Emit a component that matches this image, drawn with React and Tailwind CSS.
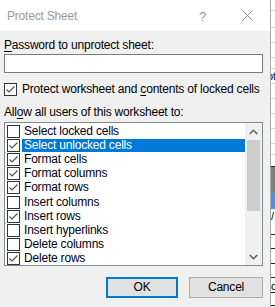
import React from "react";

const items = [
  ["Select locked cells", false],
  ["Select unlocked cells", true],
  ["Format cells", true],
  ["Format columns", true],
  ["Format rows", true],
  ["Insert columns", false],
  ["Insert rows", true],
  ["Insert hyperlinks", false],
  ["Delete columns", false],
  ["Delete rows", true],
];

function Box({ checked }) {
  return (
    <div className="w-[13px] h-[13px] border border-[#333333] bg-white flex-none relative">
      {checked && (
        <svg width="11" height="11" viewBox="0 0 11 11" className="absolute left-0 top-0">
          <path d="M1.5 5.5 L4 8 L9.5 2.5" fill="none" stroke="#4d4d4d" strokeWidth="1.1" />
        </svg>
      )}
    </div>
  );
}

export default function App() {
  return (
    <div
      className="flex w-[275px] h-[307px] overflow-hidden text-[12px] tracking-[-0.2px] text-black"
      style={{ fontFamily: '"Liberation Sans", Arial, sans-serif' }}
    >
      <div className="w-[271px] flex-none flex flex-col bg-[#f0f0f0] border-r border-[#a9a9a9]">
        <div className="h-[31px] flex-none bg-white relative">
          <div className="absolute left-[7px] top-[9px] leading-[15px] text-[#9a9a9a]">Protect Sheet</div>
          <div className="absolute left-[199px] top-[9px] leading-[15px] text-[#9a9a9a] text-[13px]">?</div>
          <svg className="absolute left-[242px] top-[10px]" width="11" height="11" viewBox="0 0 11 11">
            <path d="M0.5 0.5 L10.5 10.5 M10.5 0.5 L0.5 10.5" stroke="#8a8a8a" strokeWidth="1" />
          </svg>
        </div>
        <div className="flex flex-col pl-[4px] pr-[7px]">
          <div className="mt-[7px] h-[15px] leading-[15px]">
            <span className="underline underline-offset-2">P</span>assword to unprotect sheet:
          </div>
          <div className="mt-[1px] h-[19px] bg-white border border-[#7a7a7a]" />
          <div className="mt-[9px] h-[15px] flex items-center gap-[5px]">
            <Box checked />
            <div className="leading-[15px]">
              Protect worksheet and <span className="underline underline-offset-2">c</span>ontents of locked cells
            </div>
          </div>
          <div className="mt-[8px] h-[15px] leading-[15px]">
            All<span className="underline underline-offset-2">o</span>w all users of this worksheet to:
          </div>
          <div className="mt-[2px] h-[144px] bg-white border border-[#828790] flex overflow-hidden">
            <div className="flex-1 flex flex-col pt-[1.8px] pl-[2px]">
              {items.map(([label, checked], i) => (
                <div key={label} className="h-[14.15px] flex-none flex items-start">
                  <Box checked={checked} />
                  <div
                    className={
                      "ml-[2px] flex-1 h-[13px] leading-[13px] pl-[2px] " +
                      (i === 1 ? "bg-[#0078d7] text-white" : "text-[#000020]")
                    }
                  >
                    {label}
                  </div>
                </div>
              ))}
            </div>
            <div className="w-[17px] flex-none bg-[#f0f0f0] flex flex-col">
              <div className="h-[17px] flex items-center justify-center">
                <svg width="9" height="6" viewBox="0 0 9 6">
                  <path d="M0.8 5 L4.5 1.3 L8.2 5" fill="none" stroke="#606060" strokeWidth="1.5" />
                </svg>
              </div>
              <div className="mx-[2px] h-[71px] bg-[#cdcdcd]" />
              <div className="flex-1" />
              <div className="h-[17px] flex items-center justify-center">
                <svg width="9" height="6" viewBox="0 0 9 6">
                  <path d="M0.8 1 L4.5 4.7 L8.2 1" fill="none" stroke="#606060" strokeWidth="1.5" />
                </svg>
              </div>
            </div>
          </div>
          <div className="mt-[11px] flex justify-end gap-[11px]">
            <div className="w-[72px] h-[21px] border-2 border-[#0078d7] bg-[#e1e1e1] flex items-center justify-center leading-[15px]">
              OK
            </div>
            <div className="w-[74px] h-[21px] border border-[#adadad] bg-[#e1e1e1] flex items-center justify-center leading-[15px]">
              Cancel
            </div>
          </div>
        </div>
      </div>
      <div className="flex-1 bg-white flex flex-col text-[11px] leading-[14px] tracking-normal overflow-hidden">
        <div className="h-[11px] flex-none border-b border-[#d4d4d4]" />
        <div className="h-[17px] flex-none border-b border-[#d4d4d4]" />
        <div className="h-[15px] flex-none border-b border-[#d4d4d4]" />
        <div className="h-[15px] flex-none border-b border-[#d4d4d4]" />
        <div className="h-[11px] flex-none border-b border-[#d4d4d4]" />
        <div className="h-[15px] flex-none border-b border-[#d4d4d4] whitespace-nowrap">
          <span className="-ml-[4px]">pt</span>
        </div>
        <div className="h-[15px] flex-none border-b border-[#d4d4d4]" />
        <div className="h-[15px] flex-none border-b border-[#d4d4d4]" />
        <div className="h-[15px] flex-none border-b border-[#d4d4d4]" />
        <div className="h-[15px] flex-none border-b border-[#d4d4d4]" />
        <div className="h-[11px] flex-none border-b border-[#d4d4d4]" />
        <div className="h-[12px] flex-none border-b border-[#222]" />
        <div className="h-[26px] flex-none bg-[#808080]" />
        <div className="h-[16px] flex-none bg-[#5b8ccc]" />
        <div className="h-[13px] flex-none text-black">/</div>
        <div className="h-[13px] flex-none border-b border-[#222]" />
        <div className="h-[14px] flex-none border-b border-[#222]" />
        <div className="h-[15px] flex-none border-b border-[#222]" />
        <div className="h-[14px] flex-none border-b border-[#222]" />
        <div className="h-[15px] flex-none border-b border-[#222] whitespace-nowrap pt-[1px]">
          <span>co</span>
        </div>
        <div className="h-[13px] flex-none border-b border-[#222]" />
      </div>
    </div>
  );
}
